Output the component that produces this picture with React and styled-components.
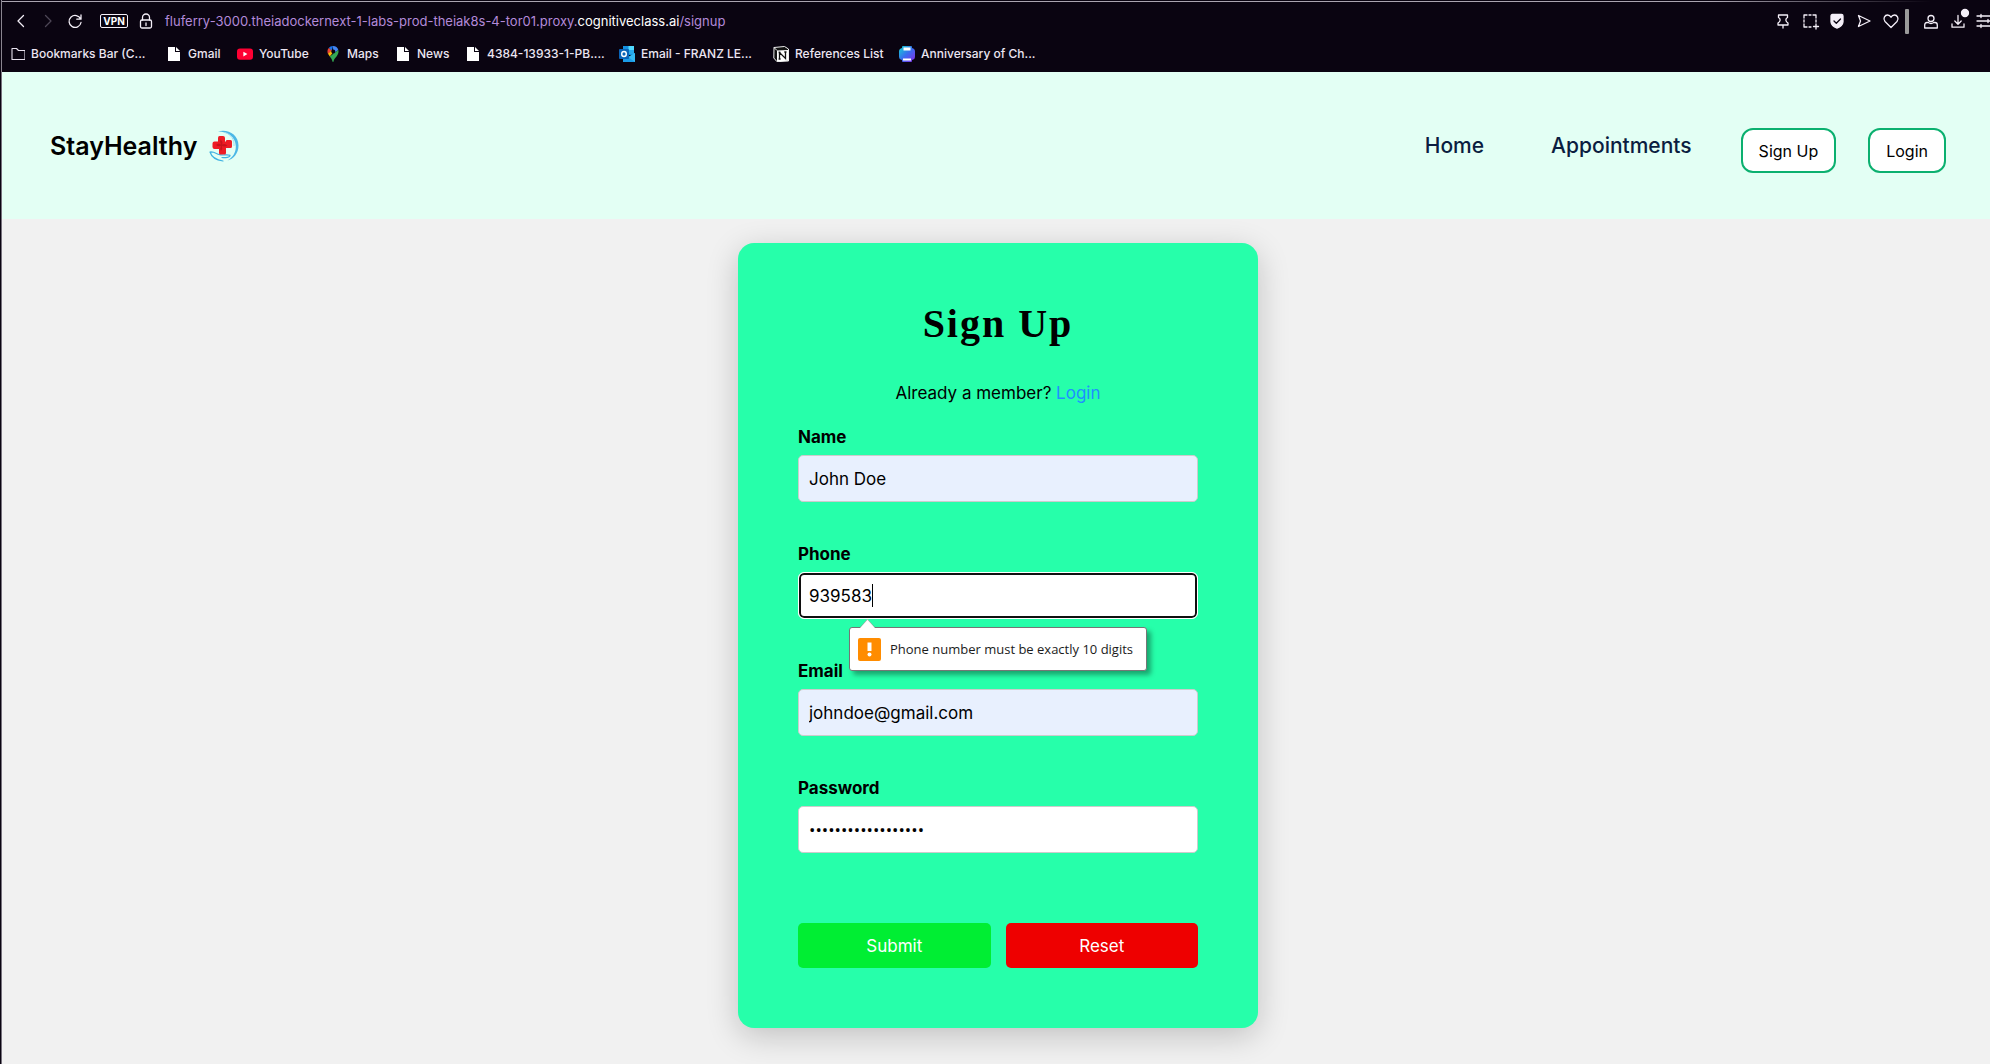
import React, { useState } from 'react';
import styled, { createGlobalStyle } from 'styled-components';

const sans = `Inter, "Open Sans", sans-serif`;

const GlobalStyle = createGlobalStyle`
  * { box-sizing: border-box; }
  body { margin: 0; background: #f1f1f1; font-family: ${sans}; color: #000; }
`;

const Window = styled.div`
  min-height: 100vh;
  border-left: 1px solid #0a0411;
  background: #f1f1f1;
  display: flex;
  flex-direction: column;
  overflow: hidden;
`;

/* Browser chrome */
const Chrome = styled.div`
  height: 72px;
  padding-top: 5px;
  border-left: 1px solid #8a8590;
  background: linear-gradient(90deg, #aaa4b0 0 86%, #0a0411 97%) 0 1px / 100% 1px no-repeat #0a0411;
  color: #ece6f2;
`;

const AddressRow = styled.div`
  display: flex;
  align-items: center;
  height: 32px;
  padding-left: 5px;
`;

const ToolButton = styled.button`
  display: flex;
  align-items: center;
  justify-content: center;
  flex: none;
  width: 27px;
  height: 30px;
  padding: 0;
  border: 0;
  background: none;
  color: ${(p) => (p.$dim ? '#4d4656' : '#f4eff8')};
  svg { width: 16px; height: 20px; overflow: visible; }
`;

const Vpn = styled.button`
  flex: none;
  width: 28px;
  height: 14px;
  margin: 0 4px 0 12px;
  padding: 0;
  border: 1px solid #f4eff8;
  border-radius: 2px;
  background: none;
  color: #fff;
  font: 700 10px/12px ${sans};
`;

const Address = styled.div`
  flex: 1;
  margin-left: 6px;
  font-size: 13px;
  line-height: 20px;
  color: #b38ad9;
  strong { font-weight: 400; color: #fff; }
`;

const Tools = styled.div`
  display: flex;
  align-items: center;
  margin-right: -8px;
`;

const Divider = styled.span`
  width: 4px;
  height: 25px;
  margin: 0 8px 0 1px;
  border-radius: 1px;
  background: #9a9a9a;
`;

const BookmarkRow = styled.nav`
  display: flex;
  align-items: center;
  height: 33px;
  padding-left: 7px;
`;

const Bookmark = styled.a`
  display: flex;
  align-items: center;
  gap: 6px;
  width: ${(p) => p.$width}px;
  flex: none;
  color: #ece6f2;
  font-size: 12px;
  font-weight: 500;
  line-height: 16px;
  white-space: nowrap;
  text-decoration: none;
  svg { width: 16px; height: 16px; flex: none; }
`;

/* Site */
const Site = styled.div`
  flex: 1;
  border-left: 1px solid #77727d;
`;

const Header = styled.header`
  display: flex;
  align-items: center;
  justify-content: space-between;
  height: 147px;
  padding: 0 44px 0 48px;
  background: #e3fff4;
`;

const Brand = styled.a`
  display: flex;
  align-items: center;
  gap: 12px;
  color: #000;
  font-size: 25px;
  font-weight: 600;
  line-height: 32px;
  text-decoration: none;
  svg { width: 30px; height: 32px; }
`;

const Menu = styled.nav`
  display: flex;
  align-items: center;
`;

const MenuLink = styled.a`
  margin-right: ${(p) => p.$gap}px;
  color: #0b1d40;
  font-size: 21px;
  font-weight: 500;
  line-height: 28px;
  text-decoration: none;
`;

const MenuActions = styled.div`
  display: flex;
  gap: 32px;
  margin-top: 10px;
`;

const OutlineButton = styled.button`
  height: 45px;
  padding: 0 16px;
  border: 2px solid #0bb06f;
  border-radius: 12px;
  background: #fff;
  color: #000;
  font: 400 16px/24px ${sans};
`;

const Main = styled.main`
  display: flex;
  justify-content: center;
  padding: 24px 0 16px 4px;
`;

const Card = styled.form`
  width: 520px;
  padding: 60px;
  border-radius: 16px;
  background: #26ffaa;
  box-shadow: 0 8px 32px rgba(0, 0, 0, 0.2);
`;

const Title = styled.h1`
  margin: 0 0 36px;
  font: 700 40px/42px "Liberation Serif", serif;
  letter-spacing: 2px;
  text-align: center;
`;

const Hint = styled.p`
  margin: 0 0 20px;
  font-size: 17px;
  line-height: 24px;
  text-align: center;
  a { color: #1e90ff; text-decoration: none; }
`;

const Field = styled.div`
  position: relative;
  margin-bottom: 40px;
`;

const Label = styled.label`
  display: block;
  margin-bottom: 6px;
  font-size: 17px;
  font-weight: 700;
  line-height: 24px;
`;

const Input = styled.input`
  display: block;
  width: 100%;
  height: 47px;
  padding: 10px;
  border: 1px solid ${(p) => (p.$active ? '#fff' : '#ccc')};
  border-radius: ${(p) => (p.$active ? 6 : 5)}px;
  outline: 0;
  background: ${(p) => (p.$filled ? '#e8f0fe' : '#fff')};
  box-shadow: ${(p) => (p.$active ? 'inset 0 0 0 2px #101010' : 'none')};
  color: #000;
  font: 400 17px/25px ${(p) => (p.type === 'password' ? '"Open Sans", sans-serif' : sans)};
`;

const Caret = styled.span`
  position: absolute;
  left: 74px;
  top: 42px;
  width: 1px;
  height: 23px;
  background: #000;
`;

const Bubble = styled.div`
  position: absolute;
  left: 51px;
  top: 85px;
  z-index: 1;
  display: flex;
  align-items: center;
  gap: 9px;
  width: 298px;
  height: 44px;
  padding: 0 8px;
  border: 1px solid #767676;
  border-radius: 3px;
  background: #fff;
  box-shadow: 4px 4px 5px rgba(0, 0, 0, 0.35);
  color: #1b1b1b;
  font: 400 13px/20px "Open Sans", sans-serif;
  white-space: nowrap;
  > svg { flex: none; }
`;

const BubbleArrow = styled.svg`
  position: absolute;
  left: 9px;
  top: -9px;
  width: 17px;
  height: 10px;
`;

const Actions = styled.div`
  display: flex;
  gap: 15px;
  margin-top: 70px;
`;

const ActionButton = styled.button`
  flex: 1;
  height: 45px;
  padding: 0;
  border: 0;
  border-radius: 5px;
  background: ${(p) => (p.$danger ? '#ee0000' : '#00ee33')};
  color: #fff;
  font: 400 17px/24px ${sans};
`;

const Line = ({ children, ...rest }) => (
  <svg viewBox="0 0 16 20" fill="none" stroke="currentColor" strokeWidth="1.3" strokeLinecap="round" strokeLinejoin="round" aria-hidden="true" {...rest}>
    {children}
  </svg>
);

const Page = () => (
  <svg viewBox="0 0 16 16" aria-hidden="true">
    <path fill="#fff" d="M2 1h7v5h5v9H2z" />
    <path fill="#fff" d="M10 1l4 4h-4z" />
  </svg>
);

const Folder = () => (
  <svg viewBox="0 0 16 16" fill="none" stroke="#e8e2ee" strokeWidth="1.1" strokeLinejoin="round" aria-hidden="true">
    <path d="M3 2.500h4.500l2 2H16v9H3z" />
  </svg>
);

const YouTube = () => (
  <svg viewBox="0 0 16 16" aria-hidden="true">
    <rect x="0" y="2.4" width="16" height="11.4" rx="3" fill="#ff0033" />
    <path d="M6.4 5.8v4.6l4-2.3z" fill="#fff" />
  </svg>
);

const Maps = () => (
  <svg viewBox="0 0 16 16" aria-hidden="true">
    <path d="M8 0a5.5 5.5 0 0 1 5.3 4L8.2 8z" fill="#4285f4" />
    <path d="M8 0a5.4 5.4 0 0 0-4.3 2l3 3z" fill="#1a73e8" />
    <path d="M3.7 2a5.6 5.6 0 0 0-.6 6L7 4.6z" fill="#ea4335" />
    <path d="M3 7.8l1.8 2.6L9.6 4.5 6.3 4.7z" fill="#fbbc04" />
    <path d="M4.8 10.4C6.5 12.5 7 13.5 7.5 15.5q.5 1 1 0C9.5 11.5 13.7 10 13.5 5.3L13.3 4z" fill="#34a853" />
    <circle cx="8.3" cy="5.4" r="2" fill="#0a0411" />
  </svg>
);

const Outlook = () => (
  <svg viewBox="0 0 16 16" aria-hidden="true">
    <path d="M4 0h11v9H4z" fill="#1490df" />
    <path d="M9.5 0H15v4H9.5z" fill="#50d9ff" />
    <path d="M9.5 4H15v4H9.5z" fill="#28a8ea" />
    <path d="M4 7l6 4 6-4v9H4z" fill="#1a9be8" />
    <path d="M16 7v9L9 11z" fill="#35b8f1" />
    <rect x="0" y="3" width="10" height="10" rx="1" fill="#0a64b8" />
    <ellipse cx="5" cy="8" rx="2.3" ry="2.5" fill="none" stroke="#fff" strokeWidth="1.4" />
  </svg>
);

const Notion = () => (
  <svg viewBox="0 0 16 16" aria-hidden="true">
    <path d="M1 1.5 11.5.5 15.5 3v12L4 15.7.8 12z" fill="#111" stroke="#eee" strokeWidth="1" strokeLinejoin="round" />
    <path d="M4 4.6 15 3.9v10.9L4 15.4z" fill="#fff" />
    <path d="M6.500 13V6.500l6 6V6M5.600 6.500h2M11.300 6h2.200M5.600 13h2" stroke="#111" strokeWidth="1.3" fill="none" />
    <path d="M1 1.5 4 4.5" stroke="#eee" />
  </svg>
);

const Printer = () => (
  <svg viewBox="0 0 16 16" aria-hidden="true">
    <defs>
      <linearGradient id="printer" x1="0" y1="0" x2="1" y2="1">
        <stop offset="0" stopColor="#10d5cf" />
        <stop offset=".5" stopColor="#3a6df0" />
        <stop offset="1" stopColor="#8a2be8" />
      </linearGradient>
    </defs>
    <path d="M4 0h8q1 0 1 1v1q3 .5 3 3.500v5q0 3-3 3.500v1q0 1-1 1H4q-1 0-1-1v-1q-3-.5-3-3.500v-5Q0 2.500 3 2V1q0-1 1-1z" fill="url(#printer)" />
    <path d="M4.500 1.500h7V4.500h-7zM4 12.500h8v2H4z" fill="#fff" />
  </svg>
);

const Logo = () => (
  <svg viewBox="0 0 30 32" fill="none" aria-hidden="true">
    <path d="M9 1.5C18-1.5 29.5 4 29.5 15.5c0 8-5 13.5-11 15 5.5-3 8.5-8 8.3-14.5C26.500 6.500 18.500 1.500 9 1.500z" fill="#4cb8e6" />
    <path d="M16 2.500c6 2 9.500 7 9 13.500" stroke="#9fdcf3" strokeWidth="1" />
    <path d="M1 22c4-.5 6 1.500 9 2.500 3 1.200 9-.2 11 .8.500 2-5 2.700-8 2.200M1 22c1.500 5 6 8 13 9" stroke="#3fb2e2" strokeWidth="1.2" strokeLinecap="round" />
    <path d="M10.500 6H14q2 0 2 2v3.500h1V11q0-1 1-1h3.500q1.500 0 1.500 1.500v5q0 1.500-1.500 1.500H17v5q0 1.500-1.500 1.500h-4q-1.500 0-1.500-1.500v-4H5.500Q3.500 19 3.500 17v-3.500q0-2 2-2H9V8q0-2 1.500-2z" fill="#ee1c25" />
    <path d="M11.500 9.500q3 2.500 1.500 5 3-1.500 5.500 1-3 1.500-5.500.5 1 3-1 5-1.500-2.500 0-5-3 1-5-1 2.500-2 5-.5-1.500-2.500-.5-5z" fill="#c8141c" />
  </svg>
);

const bookmarks = [
  { text: 'Bookmarks Bar (C...', Icon: Folder, width: 157 },
  { text: 'Gmail', Icon: Page, width: 71 },
  { text: 'YouTube', Icon: YouTube, width: 88 },
  { text: 'Maps', Icon: Maps, width: 70 },
  { text: 'News', Icon: Page, width: 70 },
  { text: '4384-13933-1-PB....', Icon: Page, width: 154 },
  { text: 'Email - FRANZ LE...', Icon: Outlook, width: 154 },
  { text: 'References List', Icon: Notion, width: 126 },
  { text: 'Anniversary of Ch...', Icon: Printer, width: 154 },
];

function BrowserBar() {
  return (
    <Chrome>
      <AddressRow>
        <ToolButton aria-label="Back">
          <Line><path d="M10.500 4.500 5 10l5.500 5.500" /></Line>
        </ToolButton>
        <ToolButton $dim aria-label="Forward">
          <Line><path d="M5.500 4.500 11 10l-5.500 5.500" /></Line>
        </ToolButton>
        <ToolButton aria-label="Reload">
          <Line><path d="M13.600 8A6 6 0 1 0 14 11.500M14 4v4.200H9.800" /></Line>
        </ToolButton>
        <Vpn>VPN</Vpn>
        <ToolButton aria-label="Connection is secure">
          <Line><rect x="2.500" y="9" width="11" height="8" rx="1.5" /><path d="M4.500 9V6.500a3.500 3.500 0 0 1 7 0V9M8 12v2.500" /></Line>
        </ToolButton>
        <Address>
          fluferry-3000.theiadockernext-1-labs-prod-theiak8s-4-tor01.proxy.<strong>cognitiveclass.ai</strong>/signup
        </Address>
        <Tools>
          <ToolButton aria-label="Pin">
            <Line><path d="M3.500 4h9v2.500c-2.500 1.500-2 4 .5 5.500v2H3v-2c2.500-1.500 3-4 .5-5.500zM8 14v3" /></Line>
          </ToolButton>
          <ToolButton aria-label="Snapshot">
            <Line><path d="M2 7V4h3M7 4h2M11 4h3v3M14 9v2M2 9v2M2 13v3h3M7 16h2M14 13v5M11.500 15.500h5" /></Line>
          </ToolButton>
          <ToolButton aria-label="Ad blocker">
            <Line><path d="M2 5q0-1.500 1.500-1.500h9Q14 3.500 14 5v6q-.5 4.500-6 6-5.500-1.500-6-6z" fill="currentColor" /><path d="M5 10l2.300 2.300L11.500 8" stroke="#0a0411" /></Line>
          </ToolButton>
          <ToolButton aria-label="Send to My Flow">
            <Line><path d="M2.500 4.500 14 10 2.500 15.500 4.500 10z" /></Line>
          </ToolButton>
          <ToolButton aria-label="Add to bookmarks">
            <Line><path d="M8 16.500 2 10.500C-.5 7.500 2 4 4.500 4 6.500 4 7.500 5.300 8 6.300 8.500 5.300 9.500 4 11.500 4 14 4 16.500 7.500 14 10.500z" /></Line>
          </ToolButton>
          <Divider />
          <ToolButton aria-label="Profile">
            <Line><circle cx="8" cy="7.500" r="3" /><path d="M5.300 11.500H4Q1.700 11.500 1.700 14v3h12.600v-3q0-2.500-2.300-2.500h-1.300Q8 13.500 5.300 11.500z" /></Line>
          </ToolButton>
          <ToolButton aria-label="Downloads">
            <Line><path d="M8 4.500V13M4.800 10 8 13.200 11.200 10M2 13v3.200h12V13" /><circle cx="15" cy="2" r="3.500" fill="currentColor" /></Line>
          </ToolButton>
          <ToolButton aria-label="Easy setup">
            <Line><path d="M0 5h16M0 10h16M0 15h16M4 3.500v3M11 8.500v3M4 13.500v3" /></Line>
          </ToolButton>
        </Tools>
      </AddressRow>
      <BookmarkRow aria-label="Bookmarks">
        {bookmarks.map(({ text, Icon, width }) => (
          <Bookmark key={text} href="#" $width={width}>
            <Icon />
            {text}
          </Bookmark>
        ))}
      </BookmarkRow>
    </Chrome>
  );
}

function TextField({ id, label, children, initial, ...rest }) {
  const [value, setValue] = useState(initial);
  return (
    <Field>
      <Label htmlFor={id}>{label}</Label>
      <Input id={id} value={value} onChange={(e) => setValue(e.target.value)} {...rest} />
      {children}
    </Field>
  );
}

export default function App() {
  return (
    <Window>
      <GlobalStyle />
      <BrowserBar />
      <Site>
        <Header>
          <Brand href="#">
            StayHealthy
            <Logo />
          </Brand>
          <Menu aria-label="Main">
            <MenuLink href="#" $gap={67}>Home</MenuLink>
            <MenuLink href="#" $gap={49}>Appointments</MenuLink>
            <MenuActions>
              <OutlineButton>Sign Up</OutlineButton>
              <OutlineButton>Login</OutlineButton>
            </MenuActions>
          </Menu>
        </Header>
        <Main>
          <Card onSubmit={(e) => e.preventDefault()}>
            <Title>Sign Up</Title>
            <Hint>
              Already a member? <a href="#">Login</a>
            </Hint>
            <TextField id="name" label="Name" type="text" initial="John Doe" $filled />
            <TextField id="phone" label="Phone" type="tel" initial="939583" $active>
              <Caret />
              <Bubble role="alert">
                <BubbleArrow viewBox="0 0 17 10" aria-hidden="true">
                  <path d="M0 10 8.500 0 17 10z" fill="#fff" />
                  <path d="M.5 9 8.500.500l8 8.500" fill="none" stroke="#767676" strokeOpacity=".5" />
                </BubbleArrow>
                <svg width="23" height="23" viewBox="0 0 23 23" aria-hidden="true">
                  <rect width="23" height="23" rx="2" fill="#ff8c00" />
                  <path d="M9.500 4.500h4v8.500h-4z" fill="#fff" />
                  <circle cx="11.500" cy="16.500" r="2" fill="#fff" />
                </svg>
                Phone number must be exactly 10 digits
              </Bubble>
            </TextField>
            <TextField id="email" label="Email" type="email" initial="johndoe@gmail.com" $filled />
            <TextField id="password" label="Password" type="password" initial="stayhealthy2024abc" />
            <Actions>
              <ActionButton type="submit">Submit</ActionButton>
              <ActionButton type="reset" $danger>Reset</ActionButton>
            </Actions>
          </Card>
        </Main>
      </Site>
    </Window>
  );
}
